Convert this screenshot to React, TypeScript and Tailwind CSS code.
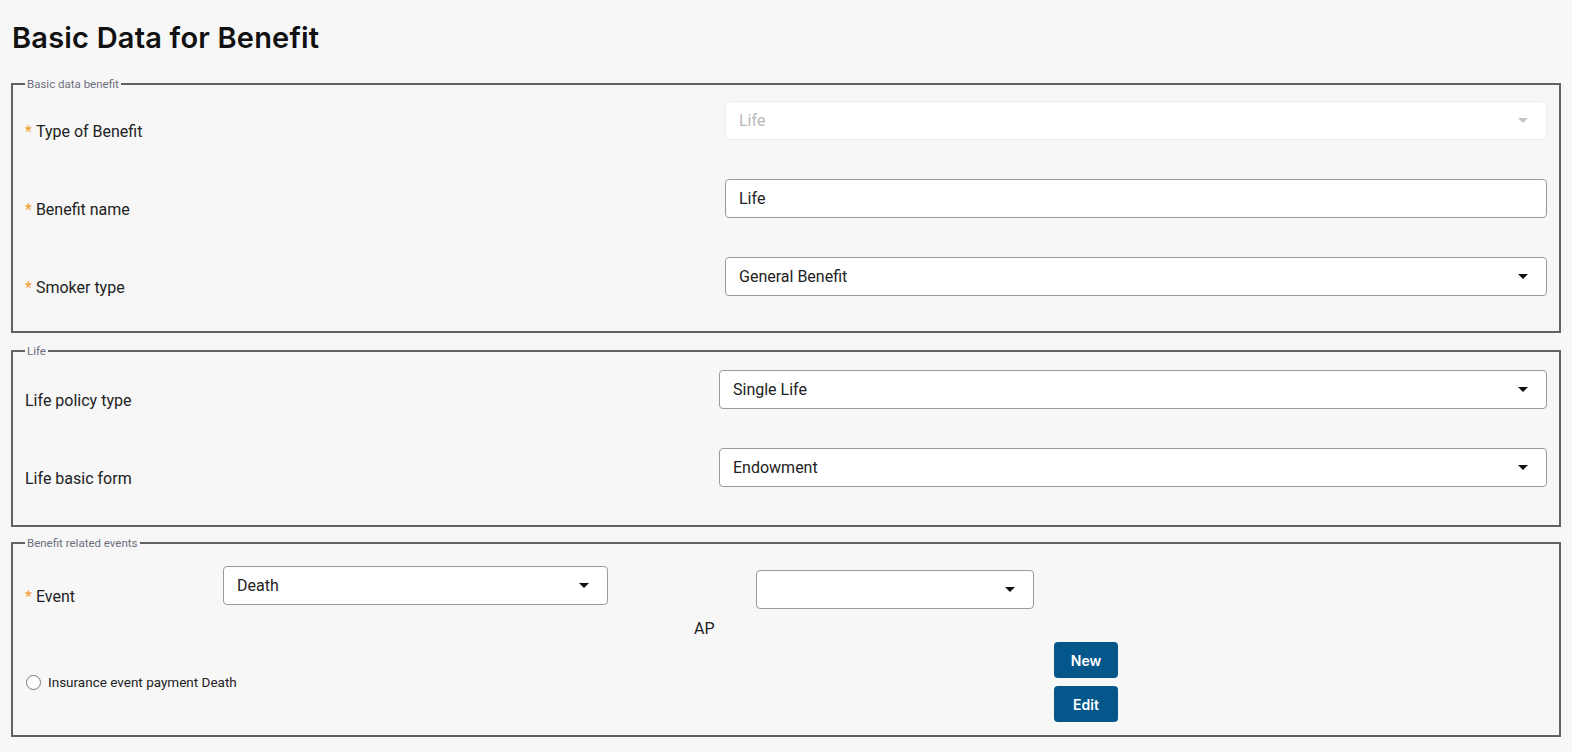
import type { ReactNode } from 'react';

const labelFont = { fontFamily: 'Roboto, "Liberation Sans", sans-serif' };

function Caret({ muted }: { muted?: boolean }) {
  return (
    <svg width="10" height="5" viewBox="0 0 10 5" className={muted ? 'fill-[#c4c4c4]' : 'fill-[#111]'}>
      <path d="M0 0h10L5 5z" />
    </svg>
  );
}

function Select({ value, disabled, className = '' }: { value?: string; disabled?: boolean; className?: string }) {
  return (
    <div
      className={`flex h-[39px] items-center justify-between rounded-[4px] border bg-white pl-[13px] pr-[18px] text-[16px] ${
        disabled ? 'border-[#ececec] text-[#b9b9b9]' : 'border-[#9a9a9a] text-[#222]'
      } ${className}`}
    >
      <span>{value}</span>
      <Caret muted={disabled} />
    </div>
  );
}

function TextInput({ value }: { value: string }) {
  return (
    <div className="flex h-[39px] items-center rounded-[4px] border border-[#9a9a9a] bg-white pl-[13px] text-[16px] text-[#222]">
      {value}
    </div>
  );
}

function Label({ text, required }: { text: string; required?: boolean }) {
  return (
    <div className="pt-[21px] text-[16px] leading-[20px] text-[#222]">
      {required && <span className="mr-[4px] text-[#f0a030]">*</span>}
      {text}
    </div>
  );
}

function Group({ legend, children, className = '' }: { legend: string; children: ReactNode; className?: string }) {
  return (
    <fieldset className={`border-2 border-[#5f6266] px-3 ${className}`}>
      <legend className="ml-0 px-[2px] text-[11.5px] leading-[14px] text-[#6e6e7c]">{legend}</legend>
      {children}
    </fieldset>
  );
}

export default function App() {
  return (
    <div className="min-h-screen bg-[#f7f7f7] px-[11px] pb-6" style={labelFont}>
      <h1
        className="pl-[1px] pt-[20px] pb-[21px] text-[29px] font-semibold leading-[36px] tracking-[0.2px] text-[#111]"
        style={{ fontFamily: 'Inter, "Noto Sans", sans-serif' }}
      >
        Basic Data for Benefit
      </h1>

      <Group legend="Basic data benefit" className="pt-[10px] pb-[33px]">
        <div className="flex flex-col gap-[37px]">
          <div className="grid grid-cols-[700px_1fr]">
            <Label text="Type of Benefit" required />
            <Select value="Life" disabled />
          </div>
          <div className="grid grid-cols-[700px_1fr]">
            <Label text="Benefit name" required />
            <TextInput value="Life" />
          </div>
          <div className="grid grid-cols-[700px_1fr]">
            <Label text="Smoker type" required />
            <Select value="General Benefit" />
          </div>
        </div>
      </Group>

      <Group legend="Life" className="mt-[11px] pt-[12px] pb-[36px]">
        <div className="flex flex-col gap-[37px]">
          <div className="grid grid-cols-[694px_1fr]">
            <Label text="Life policy type" />
            <Select value="Single Life" />
          </div>
          <div className="grid grid-cols-[694px_1fr]">
            <Label text="Life basic form" />
            <Select value="Endowment" />
          </div>
        </div>
      </Group>

      <Group legend="Benefit related events" className="mt-[9px] pt-[16px] pb-[13px]">
        <div className="flex items-start">
          <div className="w-[198px]">
            <Label text="Event" required />
          </div>
          <Select value="Death" className="w-[385px]" />
          <div className="ml-[86px] w-[62px] pt-[53px] text-[16px] leading-[20px] text-[#222]">AP</div>
          <Select className="mt-[4px] w-[278px]" />
        </div>
        <div className="mt-[3px] flex items-center">
          <label className="flex w-[1029px] items-center gap-[7px] pl-[1px] text-[13.5px] text-[#222]">
            <span className="h-[15px] w-[15px] rounded-full border-[1.5px] border-[#777] bg-white" />
            Insurance event payment Death
          </label>
          <div className="flex flex-col gap-[8px]">
            {['New', 'Edit'].map((b) => (
              <button
                key={b}
                className="h-[36px] w-[64px] rounded-[4px] bg-[#04578a] text-[14px] font-semibold text-white"
                style={{ fontFamily: 'Inter, "Noto Sans", sans-serif' }}
              >
                {b}
              </button>
            ))}
          </div>
        </div>
      </Group>
    </div>
  );
}
